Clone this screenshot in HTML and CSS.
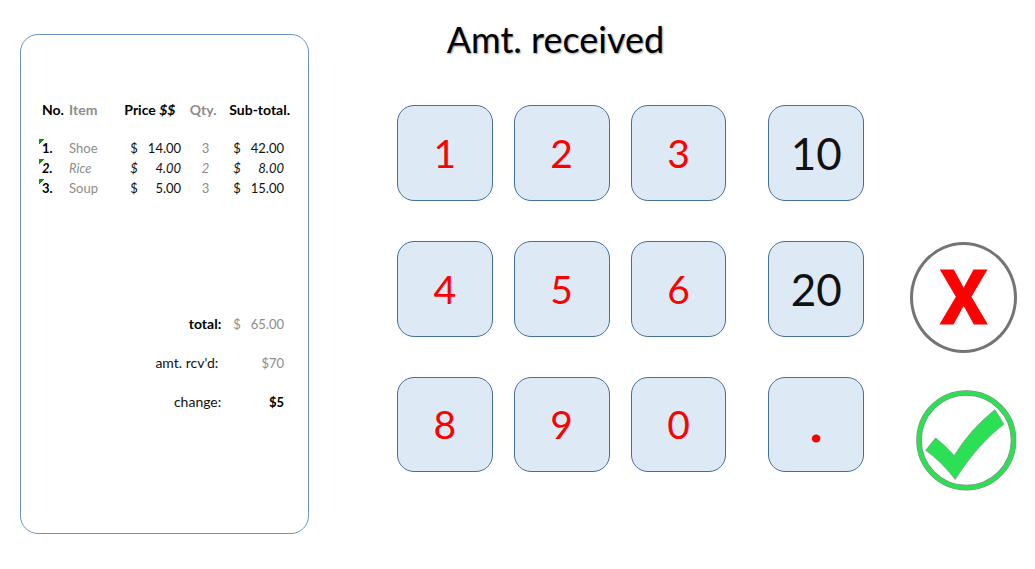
FILE: index.html
```html
<!DOCTYPE html>
<html lang="en">
<head>
<meta charset="utf-8">
<meta name="viewport" content="width=device-width, initial-scale=1">
<title>Amt. received</title>
<link rel="stylesheet" href="styles.css">
</head>
<body>
<main class="register">
  <section class="receipt" aria-label="Receipt">
    <table class="items">
      <colgroup><col class="col-no"><col class="col-item"><col class="col-price"><col class="col-qty"><col class="col-sub"></colgroup>
      <thead>
        <tr><th>No.</th><th class="muted">Item</th><th>Price <i>$$</i></th><th class="muted center">Qty.</th><th class="sub-head">Sub-total.</th></tr>
      </thead>
      <tbody>
        <tr><th class="flag">1.</th><td class="muted">Shoe</td><td><span class="money"><span>$</span><span>14.00</span></span></td><td class="muted qty">3</td><td><span class="money"><span>$</span><span>42.00</span></span></td></tr>
        <tr class="alt"><th class="flag">2.</th><td class="muted">Rice</td><td><span class="money"><span>$</span><span>4.00</span></span></td><td class="muted qty">2</td><td><span class="money"><span>$</span><span>8.00</span></span></td></tr>
        <tr><th class="flag">3.</th><td class="muted">Soup</td><td><span class="money"><span>$</span><span>5.00</span></span></td><td class="muted qty">3</td><td><span class="money"><span>$</span><span>15.00</span></span></td></tr>
      </tbody>
    </table>
    <table class="totals">
      <colgroup><col><col class="col-sub"></colgroup>
      <tbody>
        <tr><th class="strong">total:</th><td class="muted"><span class="money"><span>$</span><span>65.00</span></span></td></tr>
        <tr><th class="indent">amt. rcv'd:</th><td class="muted"><span class="money single">$70</span></td></tr>
        <tr><th>change:</th><td class="strong"><span class="money single">$5</span></td></tr>
      </tbody>
    </table>
  </section>

  <section class="pad">
    <h1 class="title">Amt. received</h1>
    <div class="keys">
      <div class="digits">
        <button class="key">1</button><button class="key">2</button><button class="key">3</button>
        <button class="key">4</button><button class="key">5</button><button class="key">6</button>
        <button class="key">8</button><button class="key">9</button><button class="key">0</button>
      </div>
      <div class="extras">
        <button class="key note">10</button>
        <button class="key note">20</button>
        <button class="key point">.</button>
      </div>
    </div>
  </section>

  <section class="actions">
    <button class="cancel" aria-label="Cancel">X</button>
    <button class="confirm" aria-label="Confirm">
      <svg viewBox="0 0 100 100" aria-hidden="true">
        <circle cx="50" cy="50" r="47" fill="none" stroke="#8b8b8b" stroke-width="5.6"/>
        <circle cx="50" cy="50" r="47" fill="none" stroke="#2ce055" stroke-width="4.4"/>
        <path d="M9.5 60 L19.5 47.500 Q29 55 38 65 Q54 39 78.500 19.500 L87.500 34 Q61 54 39 89 Q25 71 9.500 60Z" fill="#2ce055" stroke="#8b8b8b" stroke-width=".6"/>
      </svg>
    </button>
  </section>
</main>
</body>
</html>
```
FILE: styles.css
```css
* { box-sizing: border-box; }

body {
  margin: 0;
  background: #fff;
  color: #111;
  font-family: Lato, "Liberation Sans", sans-serif;
  font-size: 13px;
}

button {
  padding: 0;
  font-family: inherit;
  cursor: pointer;
}

.register {
  display: grid;
  grid-template-columns: 289fr 601fr 107fr;
  align-items: start;
  padding: 0 18px 0 20px;
}

.receipt {
  margin-top: 34px;
  padding: 55px 18px 112px;
  border: 1px solid #6c93bb;
  border-radius: 18px;
}

table {
  width: 100%;
  border-collapse: collapse;
  table-layout: fixed;
}

th, td {
  height: 20px;
  padding: 0;
  line-height: 20px;
  text-align: left;
  font-weight: 400;
  white-space: nowrap;
}

.items th, .strong { font-weight: 700; color: #000; }
.items .muted, .totals .muted { color: #8c8c8c; }
.items thead th { height: 48px; padding-bottom: 8px; font-size: 14px; }

.col-no { width: 12%; }
.col-item { width: 22%; }
.col-price { width: 25%; }
.col-qty { width: 16%; }
.col-sub { width: 25%; }

.items th:first-child { padding-left: 3px; }
.items .center { padding-right: 8px; text-align: center; }
.items .qty { padding-right: 18px; text-align: right; }
.sub-head { text-indent: 2px; }
.flag { background: linear-gradient(135deg, #168a16 50%, transparent 50%) 0 1px / 6px 6px no-repeat; }
.alt, .alt .flag { font-style: italic; }

.money {
  display: flex;
  justify-content: space-between;
  padding: 0 6px;
}
.single { justify-content: flex-end; }

.totals { margin-top: 106px; }
.totals th, .totals td { height: 39px; }
.totals th { padding-right: 6px; font-size: 14px; text-align: right; }
.totals .indent { padding-right: 9px; }

.pad { padding: 0 47px 0 88px; }

.title {
  width: 68%;
  margin: 19px 0 46px;
  color: #000;
  font-size: 36px;
  font-weight: 400;
  line-height: 40px;
  text-align: center;
  white-space: nowrap;
  text-shadow: 1px 1px 2px #999;
}

.keys {
  display: grid;
  grid-template-columns: 329fr 96fr;
  gap: 42px;
}

.digits, .extras {
  display: grid;
  gap: 40px 21px;
}
.digits { grid-template-columns: repeat(3, 1fr); }

.key {
  aspect-ratio: 1;
  border: 1px solid #446f99;
  border-radius: 17px;
  background: #dde9f5;
  color: #f00;
  font-size: 39px;
  line-height: 48px;
}
.note { color: #111; font-size: 44px; }
.point {
  font-family: Roboto, sans-serif;
  font-size: 54px;
  font-weight: 700;
}

.actions {
  display: grid;
  gap: 37px;
  justify-items: end;
  margin-top: 242px;
}

.cancel {
  width: 100%;
  aspect-ratio: 107 / 111;
  border: 3px solid #777374;
  border-radius: 50%;
  background: #fff;
  color: #f00;
  font-family: Roboto, sans-serif;
  font-size: 76px;
  font-weight: 700;
  line-height: 80px;
  -webkit-text-stroke: 1px #f00;
}

.confirm {
  width: 94%;
  aspect-ratio: 1;
  border: 0;
  border-radius: 50%;
  background: none;
}
.confirm svg { display: block; width: 100%; }
```
